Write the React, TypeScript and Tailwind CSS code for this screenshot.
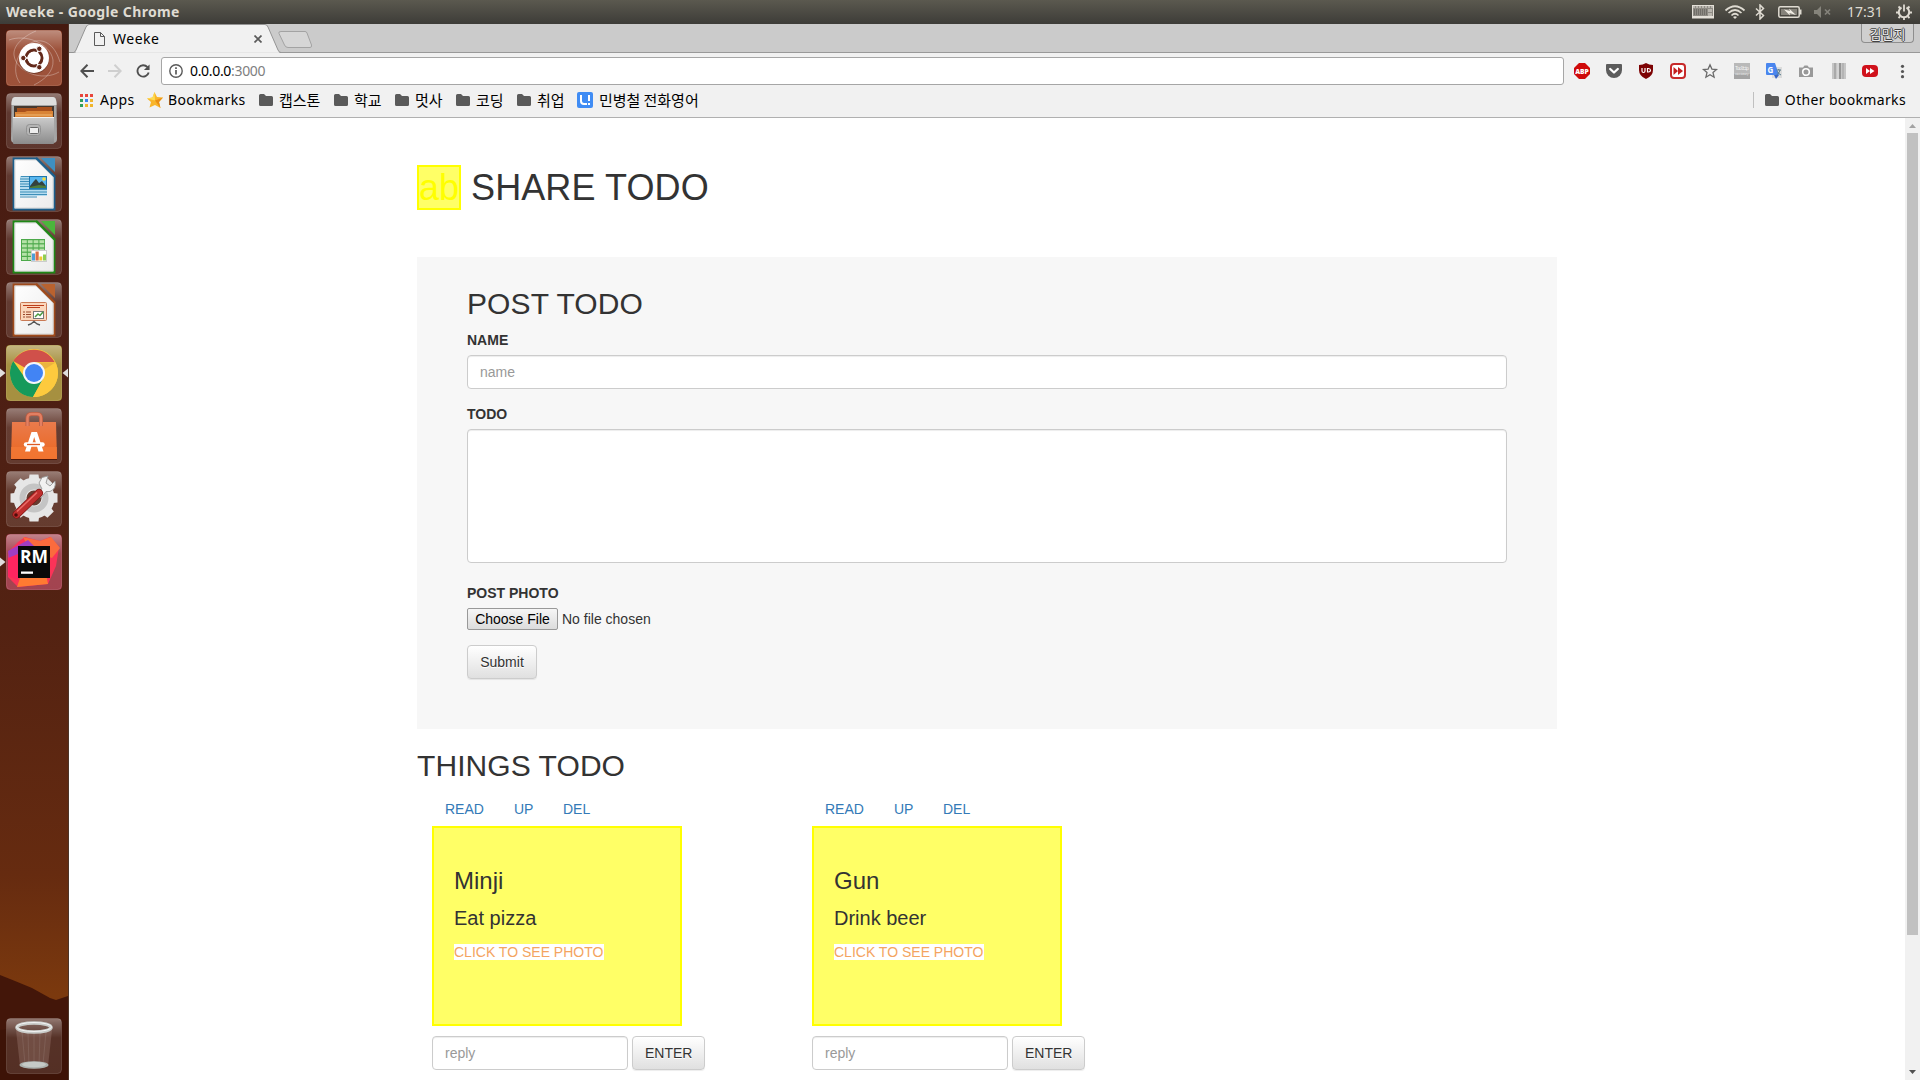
import React from "react";

const UI = "font-['Noto_Sans','Noto_Sans_CJK_KR',sans-serif]";

/* ---------- Launcher ---------- */

function Glass({ id }: { id: string }) {
  return (
    <defs>
      <linearGradient id={id} x1="0" y1="0" x2="0" y2="1">
        <stop offset="0" stopColor="#fff" stopOpacity=".42" />
        <stop offset=".35" stopColor="#fff" stopOpacity=".13" />
        <stop offset="1" stopColor="#fff" stopOpacity=".12" />
      </linearGradient>
    </defs>
  );
}

function Tile({ id, children, fill }: { id: string; children: React.ReactNode; fill?: string }) {
  return (
    <svg width="56" height="56" viewBox="0 0 56 56" className="block shrink-0">
      <Glass id={"glass-" + id} />
      {fill && <rect width="56" height="56" rx="4" fill={fill} />}
      <rect x=".5" y=".5" width="55" height="55" rx="4" fill={"url(#glass-" + id + ")"} stroke="#fff" strokeOpacity=".14" />
      {children}
    </svg>
  );
}

function UbuntuIcon() {
  return (
    <Tile id="ubuntu" fill="#8f3a1f">
      <g fill="none" stroke="#fff" strokeOpacity=".3">
        <path d="M3 10C18 4 44 12 47 30C48 42 38 50 28 55" />
        <path d="M53 42C36 52 10 42 8 25C7 15 18 6 30 1" />
        <path d="M14 53C4 40 12 16 30 11C44 9 51 22 54 32" />
      </g>
      <circle cx="28" cy="29" r="15" fill="#2a0d05" fillOpacity=".35" />
      <circle cx="28" cy="28" r="15" fill="#fff" />
      <circle cx="28" cy="28" r="8" fill="none" stroke="#63291a" strokeWidth="3" />
      <g stroke="#fff" strokeWidth="1.500">
        <path d="M28 28L16 28M28 28L34 18M28 28L34 38" />
      </g>
      <circle cx="28" cy="28" r="6.300" fill="#fff" />
      <g fill="#63291a" stroke="#fff">
        <circle cx="17.300" cy="28" r="2.700" />
        <circle cx="33.300" cy="18.800" r="2.700" />
        <circle cx="33.300" cy="37.200" r="2.700" />
      </g>
    </Tile>
  );
}

function FilesIcon() {
  return (
    <Tile id="files">
      <defs>
        <linearGradient id="cab" x1="0" y1="0" x2="0" y2="1">
          <stop offset="0" stopColor="#cccccc" />
          <stop offset="1" stopColor="#8b8b8b" />
        </linearGradient>
      </defs>
      <path d="M9 4H47Q50 4 50.500 9L51 46Q51 50 47 50H9Q5 50 5 46L5.500 9Q6 4 9 4Z" fill="#a5a5a5" />
      <path d="M9 4H47Q50 4 50.500 10V12H5.500V10Q6 4 9 4Z" fill="#dedede" />
      <rect x="8" y="13" width="40" height="12" fill="#45382f" />
      <path d="M11 15H31V14H46V25H11Z" fill="#a8501c" />
      <path d="M9 19H19L21 18H47V25H9Z" fill="#d98437" />
      <path d="M10 22H46" stroke="#f0b873" />
      <rect x="7" y="24" width="41" height="27" rx="1" fill="url(#cab)" />
      <path d="M7 24.500H48" stroke="#f2f2f2" />
      <rect x="20.500" y="31.500" width="14" height="11" rx="3" fill="#b5b5b5" stroke="#929292" />
      <rect x="23.500" y="34.500" width="9" height="6" rx="1" fill="#ededed" stroke="#666" />
    </Tile>
  );
}

function Doc({ id, color, fold, children }: { id: string; color: string; fold: string; children: React.ReactNode }) {
  return (
    <Tile id={id}>
      <defs>
        <linearGradient id={"paper-" + id} x1="0" y1="0" x2="1" y2="1">
          <stop offset="0" stopColor="#fff" />
          <stop offset="1" stopColor="#ebebeb" />
        </linearGradient>
      </defs>
      <path d="M7.500 2.500H31L48.500 20V53.500H7.500Z" fill={"url(#paper-" + id + ")"} stroke={color} strokeWidth="1.800" />
      <path d="M9 4H30L47 21V52H9Z" fill="none" stroke="#ccc" strokeOpacity=".7" />
      <path d="M30 2L49 21" stroke={color} strokeWidth="2" />
      <path d="M35 2H49V16Z" fill={fold} />
      {children}
    </Tile>
  );
}

function WriterIcon() {
  return (
    <Doc id="writer" color="#1c5f8c" fold="#3f8fc0">
      <rect x="14" y="20" width="27" height="20" fill="#b5dcef" />
      <g stroke="#3e8fb9" strokeWidth="1.200">
        <path d="M15 20.500H23M14 23H23M14 25.500H23M14 28H23M14 30.500H23M14 33.500H41M14 36H41M14 38.500H41M14 41H31" />
      </g>
      <rect x="23.500" y="20.500" width="17" height="12" fill="#57b6ef" stroke="#1d77b0" />
      <circle cx="38" cy="23" r="1.800" fill="#f6dc42" />
      <path d="M24 30L28 25L30 23L33 27L36 25L40 30V32H24Z" fill="#33413e" />
      <path d="M24 31L33 29L40 30V32H24Z" fill="#4d7c3a" />
    </Doc>
  );
}

function CalcIcon() {
  return (
    <Doc id="calc" color="#1f8716" fold="#4bb53c">
      <rect x="15" y="20" width="24" height="22" fill="#4ca94a" />
      <g fill="#b5e2a8">
        {[0, 1, 2, 3, 4].map((r) =>
          [0, 1, 2, 3].map((c) => <rect key={r + "-" + c} x={16 + c * 5.8} y={21.2 + r * 4.2} width="4.800" height="3" />)
        )}
      </g>
      <rect x="25.500" y="31.500" width="15" height="11" fill="#fff" stroke="#ccc" />
      <rect x="26" y="34.500" width="3" height="7" fill="#4f9fd8" />
      <rect x="29.500" y="32.500" width="3.200" height="9" fill="#dd6e47" />
      <rect x="33.300" y="37.500" width="3" height="4" fill="#f1c633" />
      <rect x="37" y="35.500" width="3" height="6" fill="#8fce53" />
    </Doc>
  );
}

function ImpressIcon() {
  return (
    <Doc id="impress" color="#9f4a1b" fold="#b9622f">
      <rect x="14.500" y="20.500" width="26" height="18" rx="1" fill="#fbd7bc" stroke="#c97a55" />
      <path d="M17 23.500H38M21 25.500H34" stroke="#bd3e1a" strokeWidth="1.200" />
      <path d="M17 30H19M17 32.500H19M17 35H19M20 30H25M20 32.500H25M20 35H25" stroke="#99482c" />
      <rect x="27.500" y="29.500" width="10" height="7" fill="#fff" stroke="#777" />
      <path d="M29 35L32 32L34 33.500L37 30" stroke="#4b9b40" strokeWidth="1.500" fill="none" />
      <path d="M28 39V41M22 43L25 42L28 39.500L31 42L34 43" stroke="#555" strokeWidth="1.400" fill="none" />
    </Doc>
  );
}

function ChromeIcon() {
  return (
    <Tile id="chrome" fill="#9a8126">
      <circle cx="28" cy="28" r="24" fill="#fdc93b" />
      <path d="M28 28L7.200 16A24 24 0 0 1 48.600 17H28Z" fill="#d0504a" />
      <path d="M7.200 16A24 24 0 0 0 27 52L37 34L19 33Z" fill="#169a5b" />
      <path d="M28 17.500H49.500A24 24 0 0 1 27 52L37 34Z" fill="#fdca3e" />
      <path d="M28 17.500H49.500L39 24Z" fill="#e0a53d" opacity=".6" />
      <circle cx="28" cy="28" r="11" fill="#f4f6fa" />
      <circle cx="28" cy="28" r="9" fill="#4284f4" />
    </Tile>
  );
}

function SoftwareIcon() {
  return (
    <Tile id="software">
      <defs>
        <linearGradient id="bag" x1="0" y1="0" x2="0" y2="1">
          <stop offset="0" stopColor="#ea7b4c" />
          <stop offset="1" stopColor="#ea661f" />
        </linearGradient>
      </defs>
      <path d="M6 14H50L51 51H5Z" fill="url(#bag)" />
      <path d="M5 39H51V51H5Z" fill="#f47b38" opacity=".7" />
      <path d="M5 51.500H51" stroke="#4e180a" />
      <path d="M21.500 18V10Q21.500 6 25.500 6H31Q35 6 35 10V18" fill="none" stroke="#bb5d42" strokeWidth="4" />
      <path d="M21.500 18V10Q21.500 6 25.500 6H31Q35 6 35 10V18" fill="none" stroke="#e27f62" strokeWidth="2.400" />
      <path d="M25.500 24H31L37.500 43.500H32.500L28.200 29L24 43.500H19Z" fill="#fff" />
      <path d="M20 36.500H36.500" stroke="#fff" strokeWidth="4.400" strokeLinecap="round" />
      <path d="M21 36.500H34" stroke="#dd5a24" strokeWidth="1.300" />
    </Tile>
  );
}

function SettingsIcon() {
  return (
    <Tile id="settings">
      <g fill="#e6e6e6">
        {[0, 45, 90, 135, 180, 225, 270, 315].map((a) => (
          <path key={a} d="M22.500 12L23.500 3.500H32.500L33.500 12Z" transform={"rotate(" + a + " 28 27)"} />
        ))}
      </g>
      <circle cx="28" cy="27" r="14" fill="none" stroke="#e6e6e6" strokeWidth="13" />
      <circle cx="28" cy="27" r="11.500" fill="none" stroke="#c4c4c4" strokeWidth="6" />
      <path d="M31 22L36 18L33 12L36 6.500L42 5L40 12L44 15L49 10Q50.500 18 44 20.500L40 20.500L35 27Z" fill="#f1f1f1" stroke="#999" strokeWidth=".9" />
      <path d="M10.500 43.500L33 22" stroke="#7f1716" strokeWidth="8" strokeLinecap="round" />
      <path d="M10.500 43.500L33 22" stroke="#be2e2d" strokeWidth="6.600" strokeLinecap="round" />
      <path d="M31 21.500L11 40.500" stroke="#ea6c68" strokeWidth="1.500" />
      <circle cx="10" cy="44" r="1.800" fill="#4e0d0c" />
    </Tile>
  );
}

function RubyMineIcon() {
  return (
    <Tile id="rubymine" fill="#962a38">
      <path d="M2 18L12 8L19 3L34 7L44 3L53 13L50 32L42 50L12 53L2 43Z" fill="#fb3358" />
      <path d="M17 3L34 7L45 3L54 14L46 24L24 16Z" fill="#fb6b3d" />
      <path d="M2 17L22 6L30 14L12 24L4 38Z" fill="#a03dc2" />
      <path d="M2 24L12 20V46L2 42Z" fill="#ff2560" />
      <path d="M14 44L40 40L42 50L11 53Z" fill="#ff7a32" />
      <rect x="12" y="12" width="32" height="32" fill="#090909" />
      <text x="14" y="29" fontFamily="Open Sans, sans-serif" fontWeight="700" fontSize="18" textLength="28" lengthAdjust="spacingAndGlyphs" fill="#fff">RM</text>
      <rect x="15" y="37.500" width="12" height="2.300" fill="#fff" />
    </Tile>
  );
}

function TrashIcon() {
  return (
    <Tile id="trash">
      <path d="M10 12H46L42 48Q28 53 14 48Z" fill="#c9a99f" fillOpacity=".24" />
      <g stroke="#eee" strokeOpacity=".1">
        <path d="M16 14L19 46M22 15L23 48M28 15V48M34 15L33 48M40 14L37 46" />
      </g>
      <ellipse cx="28" cy="47" rx="14.500" ry="3.800" fill="#aab0ac" />
      <ellipse cx="28" cy="46.500" rx="12" ry="2.800" fill="#c5cac6" />
      <ellipse cx="28" cy="9.500" rx="17" ry="4.500" fill="none" stroke="#c9ccc9" strokeWidth="3.600" />
      <ellipse cx="28" cy="9" rx="17.500" ry="4.500" fill="none" stroke="#f2f2f2" strokeWidth="1" />
    </Tile>
  );
}

function Launcher() {
  return (
    <aside className="relative flex w-[69px] shrink-0 flex-col items-center justify-between border-r border-[#4d3427] bg-[linear-gradient(to_bottom,#451a10_0px,#4d1f14_350px,#532212_600px,#662b10_850px,#7b390e_970px)] pt-[6px] pb-[6px]">
      <svg width="68" height="110" className="absolute bottom-0 left-0">
        <path d="M0 5L15 11L32 18L50 28L56 30L68 26V110H0Z" fill="#431609" />
        <path d="M0 60L68 50V110H0Z" fill="#3a1207" opacity=".6" />
      </svg>
      <div className="relative flex flex-col gap-[7px]">
        <UbuntuIcon />
        <FilesIcon />
        <WriterIcon />
        <CalcIcon />
        <ImpressIcon />
        <ChromeIcon />
        <SoftwareIcon />
        <SettingsIcon />
        <RubyMineIcon />
        <svg width="68" height="10" className="absolute top-[338px] -left-[6px]">
          <path d="M0 0.500L5.500 5L0 9.500ZM68 0.500L62.500 5L68 9.500Z" fill="#e0dedd" />
        </svg>
        <svg width="6" height="10" className="absolute top-[527px] -left-[6px]">
          <path d="M0 0.500L5.500 5L0 9.500Z" fill="#e0dedd" />
        </svg>
      </div>
      <div className="relative">
        <TrashIcon />
      </div>
    </aside>
  );
}

/* ---------- Desktop menu bar ---------- */

function MenuBar() {
  return (
    <header className={"flex h-6 shrink-0 items-center bg-[linear-gradient(to_bottom,#5b594f,#3d3c38)] pr-[8px] pl-[6px] text-[#dfdbd2] " + UI}>
      <span className="text-[14px] leading-6 font-bold tracking-[0.36px]">Weeke - Google Chrome</span>
      <div className="ml-auto flex items-center">
        <svg width="22" height="14" viewBox="0 0 22 14">
          <rect x=".5" y=".5" width="21" height="12.500" fill="#8e8b84" stroke="#e4e0d8" />
          <path d="M1 2H21" stroke="#e4e0d8" strokeDasharray="2 1" />
          <path d="M2 5H15M2 7H15M2 9H15" stroke="#55534d" strokeWidth="1.200" strokeDasharray="1 1" />
          <path d="M17 4V11M19 4V11" stroke="#e4e0d8" strokeDasharray="3 1" />
          <path d="M1 12H21" stroke="#e4e0d8" strokeWidth="2" />
        </svg>
        <svg width="22" height="16" viewBox="0 0 22 16" className="ml-[10px]" fill="none" stroke="#dfdbd2" strokeWidth="1.700">
          <path d="M1.500 6.500Q11 -2 20.500 6.500M4.500 9Q11 3 17.500 9M7.500 11.500Q11 8 14.500 11.500" />
          <path d="M9 13L11 15L13 13Q11 11.500 9 13Z" fill="#dfdbd2" stroke="none" />
        </svg>
        <svg width="10" height="16" viewBox="0 0 10 16" className="ml-[9px]" fill="none" stroke="#dfdbd2" strokeWidth="1.500">
          <path d="M1 4.500L8.500 11.500L5 15V1L8.500 4.500L1 11.500" />
        </svg>
        <svg width="25" height="12" viewBox="0 0 25 12" className="ml-[13px]">
          <rect x=".8" y=".8" width="20.400" height="10.400" rx="1.500" fill="none" stroke="#dfdbd2" strokeWidth="1.500" />
          <rect x="3" y="3" width="16" height="6" fill="#85827a" />
          <path d="M22.500 3.500V8.500" stroke="#dfdbd2" strokeWidth="2" />
          <path d="M6 3.500L12 5L11 2.500L18 9L11.500 7L12 9.500Z" fill="#f0ece4" />
        </svg>
        <svg width="18" height="12" viewBox="0 0 18 12" className="ml-[11px]">
          <path d="M0 4H3L7 0V12L3 8H0Z" fill="#85837b" />
          <path d="M11 3.500L16 8.500M16 3.500L11 8.500" stroke="#85837b" strokeWidth="1.700" />
        </svg>
        <span className="ml-[15px] w-[36px] text-[14px] leading-6">17:31</span>
        <svg width="16" height="16" viewBox="0 0 16 16" className="ml-[13px]" fill="none" stroke="#dfdbd2">
          <path d="M5.500 3.500A5.200 5.200 0 1 0 10.500 3.500" strokeWidth="2" />
          <path d="M8 0.500V7.500M2.500 2.500L4 4M13.500 2.500L12 4M0 8.500H2.500M13.500 8.500H16M2.500 14L4 12.500M13.500 14L12 12.500M8 14V16" strokeWidth="1.800" />
        </svg>
      </div>
    </header>
  );
}

/* ---------- Browser chrome ---------- */

function TabStrip() {
  return (
    <div className={"relative flex h-[29px] shrink-0 items-start border-b border-[#999] bg-[#cbcbcb] " + UI}>
      <svg width="260" height="29" className="absolute top-0 left-0">
        <path d="M0 28.500H4.500Q6 28.500 7 26L17 3Q18.500 .5 20 .5H196Q198 .5 199 3L209 26Q210 28.500 212 28.500" fill="#f1f1f1" stroke="#949494" />
        <path d="M7 29H210" stroke="#f1f1f1" strokeWidth="1.500" />
        <path d="M212 7.500H236Q237.500 7.500 238 9L242.500 21Q243 23.500 241 23.500H219Q216.500 23.500 215.500 21L210 9.500Q209 7.500 212 7.500Z" fill="#d6d6d6" stroke="#a3a3a3" />
      </svg>
      <div className="relative flex h-7 w-[193px] items-center pt-px pl-[25px]">
        <svg width="11" height="14" viewBox="0 0 11 14" fill="none" stroke="#5a5a5a">
          <path d="M.5 .5H6.500L10.500 4.500V13.500H.5ZM6.500 .5V4.500H10.500" />
        </svg>
        <span className="ml-[8px] text-[14px] leading-7 tracking-[0.5px] text-black">Weeke</span>
        <svg width="8" height="8" viewBox="0 0 8 8" className="ml-auto">
          <path d="M.5 .5L7.500 7.500M7.500 .5L.5 7.500" stroke="#5a5a5a" strokeWidth="1.700" />
        </svg>
      </div>
      <div className="mr-[6px] ml-auto flex h-[19px] w-[53px] items-center justify-center rounded-b-[4px] border border-t-0 border-[#8e8e8e] bg-[#cfcfcf] pt-[2px] text-[13px] leading-[16px] text-[#eee] [text-shadow:1px_0_0_#444,-1px_0_0_#444,0_1px_0_#444,0_-1px_0_#444]">
        김민지
      </div>
    </div>
  );
}

function Ext({ children }: { children: React.ReactNode }) {
  return (
    <div className="flex w-8 shrink-0 items-center justify-center">
      <svg width="16" height="16" viewBox="0 0 16 16" className="overflow-visible">{children}</svg>
    </div>
  );
}

function Toolbar() {
  return (
    <div className={"flex h-[36px] shrink-0 items-center bg-[#f1f1f1] pr-[2px] pl-[11px] " + UI}>
      <svg width="14" height="14" viewBox="0 0 14 14" fill="none" stroke="#4f4f4f" strokeWidth="2">
        <path d="M14 7H1.500M7.500 .8L1.300 7L7.500 13.200" />
      </svg>
      <svg width="14" height="14" viewBox="0 0 14 14" fill="none" stroke="#cfcfcf" strokeWidth="2" className="ml-[14px]">
        <path d="M0 7H12.500M6.500 .8L12.700 7L6.500 13.200" />
      </svg>
      <svg width="14" height="14" viewBox="0 0 15 15" className="ml-[14px]">
        <path d="M12.300 3.400A6.100 6.100 0 1 0 13.600 9" fill="none" stroke="#4f4f4f" strokeWidth="2" />
        <path d="M14.500 .5V6.500H8.500Z" fill="#4f4f4f" />
      </svg>
      <div className="ml-[11px] flex h-7 grow items-center rounded-[3px] border border-[#a6a6a6] bg-white pl-[7px]">
        <svg width="14" height="14" viewBox="0 0 14 14">
          <circle cx="7" cy="7" r="6.200" fill="none" stroke="#5a5a5a" strokeWidth="1.400" />
          <path d="M7 6V10.500M7 3.200V4.900" stroke="#5a5a5a" strokeWidth="1.700" />
        </svg>
        <span className="ml-[7px] text-[14px] leading-[26px] tracking-[-0.32px] text-[#808080]">
          <span className="text-black">0.0.0.0</span>:3000
        </span>
      </div>
      <div className="ml-[2px] flex">
        <Ext>
          <path d="M5 0H11L16 5V11L11 16H5L0 11V5Z" fill="#cf0a0a" />
          <text x="1.200" y="10.800" fontFamily="Open Sans, sans-serif" fontWeight="800" fontSize="7.500" textLength="13.600" lengthAdjust="spacingAndGlyphs" fill="#fff">ABP</text>
        </Ext>
        <Ext>
          <path d="M0 2Q0 1 1 1H15Q16 1 16 2V7A8 8 0 0 1 0 7Z" fill="#5c5c5c" />
          <path d="M4.200 6L8 9.500L11.800 6" fill="none" stroke="#fff" strokeWidth="2.300" strokeLinecap="round" strokeLinejoin="round" />
        </Ext>
        <Ext>
          <path d="M8 0Q11 2 15 2V7Q15 13 8 16Q1 13 1 7V2Q5 2 8 0Z" fill="#7d0304" />
          <path d="M4 5V8Q4 9.500 5.500 9.500T7 8V5M9.500 5.500V9H10.500Q12.500 9 12.500 7.300T10.500 5.500Z" fill="none" stroke="#fff" strokeWidth="1.200" />
        </Ext>
        <Ext>
          <rect x="1" y="1" width="14" height="14" rx="3" fill="#fff" stroke="#c72a2a" strokeWidth="2" />
          <path d="M3.500 4L8 8L3.500 12ZM8 4L13 8L8 12Z" fill="#c41f1f" />
        </Ext>
        <Ext>
          <path d="M8 1.800L9.900 6.100L14.500 6.500L11 9.600L12.100 14.200L8 11.700L3.900 14.200L5 9.600L1.500 6.500L6.100 6.100Z" fill="none" stroke="#6a6a6a" strokeWidth="1.300" />
        </Ext>
        <Ext>
          <rect width="16" height="16" fill="#b9b9b9" />
          <rect y="11" width="16" height="5" fill="#a4a4a4" />
          <text x="1" y="7" fontFamily="Liberation Mono, monospace" fontSize="5" textLength="14" fill="#f3f3f3">Tooltip</text>
          <text x="1" y="12" fontFamily="Liberation Mono, monospace" fontSize="4" textLength="14" fill="#dedede">Dictionary</text>
        </Ext>
        <Ext>
          <rect x="6" y="4" width="10" height="11" fill="#dcdcdc" />
          <path d="M1 0H9L13 12H1Q0 12 0 11V1Q0 0 1 0Z" fill="#4a86ee" />
          <path d="M8 12H13L10 16Z" fill="#3563c7" />
          <text x="1.500" y="9.500" fontFamily="Open Sans, sans-serif" fontWeight="700" fontSize="8" fill="#fff">G</text>
          <path d="M10.500 7H15M12.700 6V7M14 7Q13 11 10.500 12M11.500 8.500Q12.500 11 15 12" stroke="#567b8c" fill="none" />
        </Ext>
        <Ext>
          <path d="M1 4.500H5L6.500 2.500H9.500L11 4.500H15V14H1Z" fill="#999" />
          <circle cx="8" cy="9" r="3.300" fill="#999" stroke="#fff" strokeWidth="1.600" />
        </Ext>
        <Ext>
          <rect x="2" width="14" height="16" fill="#c6c6c6" />
          <rect x="4" width="2" height="16" fill="#aaaaaa" />
          <rect x="7" width="2" height="16" fill="#d4d4d4" />
          <rect x="9" width="2" height="16" fill="#959595" />
          <rect x="12" width="2" height="16" fill="#b4b4b4" />
        </Ext>
        <Ext>
          <rect x="0" y="2" width="16" height="12" rx="4" fill="#d0121c" />
          <path d="M4 5L8 8L4 11ZM8 5L12.500 8L8 11Z" fill="#fff" />
        </Ext>
        <Ext>
          <g fill="#555">
            <circle cx="8.500" cy="3.300" r="1.600" />
            <circle cx="8.500" cy="8.500" r="1.600" />
            <circle cx="8.500" cy="13.700" r="1.600" />
          </g>
        </Ext>
      </div>
    </div>
  );
}

function Folder() {
  return (
    <svg width="14" height="12" viewBox="0 0 14 12" className="shrink-0">
      <path d="M0 1.500Q0 0 1.500 0H5L7 2H12.500Q14 2 14 3.500V10.500Q14 12 12.500 12H1.500Q0 12 0 10.500Z" fill="#5a5a5a" />
    </svg>
  );
}

const folders = [
  { name: "캡스톤", cls: "w-[75px]" },
  { name: "학교", cls: "w-[61px]" },
  { name: "멋사", cls: "w-[61px]" },
  { name: "코딩", cls: "w-[61px]" },
  { name: "취업", cls: "w-[60px]" },
];

const appColors = ["#e8453c", "#e8453c", "#e8453c", "#2f9e5c", "#3b86f0", "#f0b52b", "#2f9e5c", "#f0b52b", "#f0b52b"];

function BookmarksBar() {
  return (
    <div className={"flex h-[29px] shrink-0 items-center border-b border-[#b0b0b0] bg-[#f1f1f1] pb-[6px] pl-[11px] text-[14px] leading-[22px] whitespace-nowrap text-black " + UI}>
      <div className="flex w-[67px] items-center">
        <svg width="13" height="13" viewBox="0 0 13 13">
          {appColors.map((c, i) => (
            <rect key={i} x={(i % 3) * 5} y={Math.floor(i / 3) * 5} width="3" height="3" fill={c} />
          ))}
        </svg>
        <span className="ml-[7px] tracking-[0.45px]">Apps</span>
      </div>
      <div className="flex w-[112px] items-center">
        <svg width="16" height="16" viewBox="0 0 16 16">
          <path d="M7.500 0L10 5L16 5.500L12 10L13.500 16L8 13L2.500 15.500L4 10L0 6.500L5.500 5.500Z" fill="#f9b52a" />
          <path d="M7.500 0L8 8.500L0 6.500L5.500 5.500Z" fill="#fddc52" />
          <path d="M16 5.500L8 8.500L13.500 16L12 10Z" fill="#ea8f12" />
        </svg>
        <span className="ml-[5px] tracking-[0.35px]">Bookmarks</span>
      </div>
      {folders.map((f) => (
        <div key={f.name} className={"flex items-center " + f.cls}>
          <Folder />
          <span className="ml-[6px] font-['Noto_Sans_CJK_KR',sans-serif] text-[15px]">{f.name}</span>
        </div>
      ))}
      <div className="flex items-center">
        <svg width="16" height="16" viewBox="0 0 16 16">
          <rect width="16" height="16" rx="2" fill="#3f8cf4" />
          <path d="M4 3V9Q4 12 7 12H10" fill="none" stroke="#fff" strokeWidth="2" />
          <path d="M12 3V9M12 11V13" stroke="#fff" strokeWidth="2" />
        </svg>
        <span className="ml-[6px] font-['Noto_Sans_CJK_KR',sans-serif] text-[15px] tracking-[-0.04px]">민병철 전화영어</span>
      </div>
      <div className="ml-auto flex items-center pr-[14px]">
        <span className="mr-[11px] h-4 w-px bg-[#c0c0c0]" />
        <Folder />
        <span className="ml-[6px] tracking-[0.35px]">Other bookmarks</span>
      </div>
    </div>
  );
}

/* ---------- Page ---------- */

const inputCls =
  "block h-[34px] rounded border border-[#ccc] bg-white px-3 py-[6px] text-[14px] leading-5 text-[#555] shadow-[inset_0_1px_1px_rgba(0,0,0,0.075)] outline-none placeholder:text-[#999]";
const buttonCls =
  "block h-[34px] rounded border border-[#ccc] bg-[linear-gradient(to_bottom,#fff,#e0e0e0)] px-3 text-[14px] leading-5 text-[#333] shadow-[inset_0_1px_0_rgba(255,255,255,0.15),0_1px_1px_rgba(0,0,0,0.075)] [text-shadow:0_1px_0_#fff]";

const actions = [
  { label: "READ", cls: "w-[65px]" },
  { label: "UP", cls: "w-[45px]" },
  { label: "DEL", cls: "w-[53px]" },
];

function TodoCard({ name, todo }: { name: string; todo: string }) {
  return (
    <article className="w-[380px] pl-[15px]">
      <nav className="flex gap-1 text-[14px] leading-5 text-[#337ab7]">
        {actions.map((a) => (
          <a key={a.label} className={"py-[7px] pl-[13px] " + a.cls}>{a.label}</a>
        ))}
      </nav>
      <div className="h-[200px] w-[250px] border-2 border-[#ff0] bg-[#ff6] px-5 pt-10">
        <h3 className="text-[24px] leading-[26px]">{name}</h3>
        <p className="mt-[13px] text-[20px] leading-[22px]">{todo}</p>
        <div className="mt-[15px] flex text-[14px]">
          <a className="h-4 w-[150px] bg-white leading-4 text-[#f4a460]">CLICK TO SEE PHOTO</a>
        </div>
      </div>
      <div className="mt-[10px] flex gap-1">
        <input className={inputCls + " w-[196px]"} placeholder="reply" />
        <button className={buttonCls + " w-[73px]"}>ENTER</button>
      </div>
    </article>
  );
}

function Page() {
  return (
    <main className="min-w-0 grow overflow-hidden bg-white font-['Liberation_Sans',Arial,sans-serif] text-[#333]">
      <div className="ml-[348px] w-[1140px]">
        <h1 className="flex gap-[10px] pt-[47px] text-[36px] leading-[41px]">
          <span className="h-[45px] border-2 border-[#ff0] bg-[#ff6] text-[#ff0]">ab</span>
          <span className="py-[2px] tracking-[0.1px]">SHARE TODO</span>
        </h1>
        <section className="mt-[47px] h-[472px] bg-[#f7f7f7] px-[50px] pt-[30px]">
          <h2 className="text-[30px] leading-[33px] tracking-[0.1px]">POST TODO</h2>
          <label className="mt-[10px] mb-[5px] block text-[14px] leading-5 font-bold">NAME</label>
          <input className={inputCls + " w-full"} placeholder="name" />
          <label className="mt-[15px] mb-[5px] block text-[14px] leading-5 font-bold">TODO</label>
          <textarea className="block h-[134px] w-full resize-none rounded border border-[#ccc] bg-white px-3 py-[6px] text-[14px] leading-5 shadow-[inset_0_1px_1px_rgba(0,0,0,0.075)] outline-none" />
          <label className="mt-5 mb-[5px] block text-[14px] leading-5 font-bold">POST PHOTO</label>
          <div className="flex h-[22px] items-center text-[14px] leading-5">
            <button className="h-[22px] w-[91px] rounded-[2px] border border-[#999] bg-[linear-gradient(to_bottom,#f6f6f6,#dcdcdc)] text-[14px] leading-5 text-black">Choose File</button>
            <span className="ml-1">No file chosen</span>
          </div>
          <button className={buttonCls + " mt-[15px] w-[70px]"}>Submit</button>
        </section>
        <h2 className="mt-5 text-[30px] leading-[33px] tracking-[0.07px]">THINGS TODO</h2>
        <div className="mt-[10px] flex">
          <TodoCard name="Minji" todo="Eat pizza" />
          <TodoCard name="Gun" todo="Drink beer" />
        </div>
      </div>
    </main>
  );
}

function Scrollbar() {
  return (
    <div className="flex w-[15px] shrink-0 flex-col items-center bg-[#f1f1f1]">
      <svg width="15" height="15">
        <path d="M4 10H11L7.500 6Z" fill="#a3a3a3" />
      </svg>
      <div className="h-[802px] w-[11px] bg-[#c1c1c1]" />
      <svg width="15" height="15" className="mt-auto">
        <path d="M4 5H11L7.500 9Z" fill="#505050" />
      </svg>
    </div>
  );
}

export default function App() {
  return (
    <div className="flex h-[1080px] w-[1920px] flex-col overflow-hidden">
      <MenuBar />
      <div className="flex min-h-0 grow">
        <Launcher />
        <div className="flex min-w-0 grow flex-col">
          <TabStrip />
          <Toolbar />
          <BookmarksBar />
          <div className="flex min-h-0 grow">
            <Page />
            <Scrollbar />
          </div>
        </div>
      </div>
    </div>
  );
}
